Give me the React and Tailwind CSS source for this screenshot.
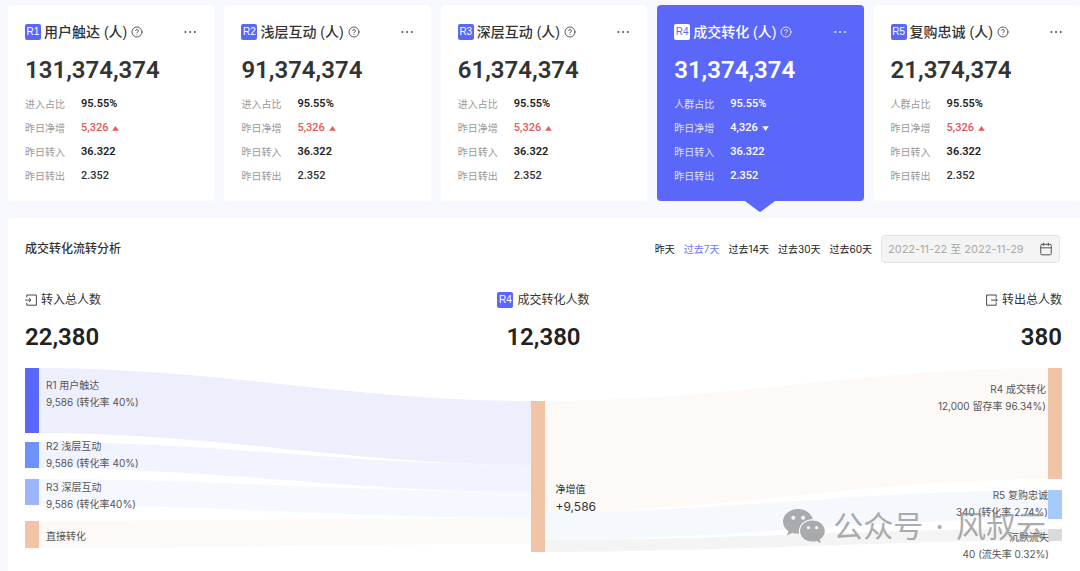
import React, { useState } from 'react';
import { Calendar, CircleHelp, Ellipsis } from 'lucide-react';

const cards = [
  { level: 'R1', name: '用户触达', total: '131,374,374', ratioLabel: '进入占比', growth: '5,326', up: true },
  { level: 'R2', name: '浅层互动', total: '91,374,374', ratioLabel: '进入占比', growth: '5,326', up: true },
  { level: 'R3', name: '深层互动', total: '61,374,374', ratioLabel: '进入占比', growth: '5,326', up: true },
  { level: 'R4', name: '成交转化', total: '31,374,374', ratioLabel: '人群占比', growth: '4,326', up: false },
  { level: 'R5', name: '复购忠诚', total: '21,374,374', ratioLabel: '人群占比', growth: '5,326', up: true },
];

const ranges = ['昨天', '过去7天', '过去14天', '过去30天', '过去60天'];

// x, y, height of each node
const nodes = [
  { x: 0, y: 0, h: 65, color: '#5b67f8' },
  { x: 0, y: 74, h: 26, color: '#6d93f8' },
  { x: 0, y: 111, h: 26, color: '#9db3fa' },
  { x: 0, y: 153, h: 27, color: '#f0c4a5' },
  { x: 506, y: 33, h: 151, color: '#f0c4a5' },
  { x: 1023, y: 0, h: 111, color: '#f0c4a5' },
  { x: 1023, y: 122, h: 29, color: '#a5cbfc' },
  { x: 1023, y: 161, h: 12, color: '#dadada' },
];

// from / to are [top, bottom]
const flows = [
  { x1: 14, x2: 506, from: [0, 65], to: [33, 97], color: '#eeeffd' },
  { x1: 14, x2: 506, from: [74, 100], to: [97, 124], color: '#f1f3fe' },
  { x1: 14, x2: 506, from: [111, 137], to: [124, 150], color: '#f5f8fe' },
  { x1: 14, x2: 506, from: [153, 180], to: [150, 176], color: '#fdf9f6' },
  { x1: 520, x2: 1023, from: [33, 144], to: [0, 111], color: '#fdf9f6' },
  { x1: 520, x2: 1023, from: [144, 172], to: [122, 151], color: '#f5f9fe' },
  { x1: 520, x2: 1023, from: [172, 184], to: [161, 173], color: '#f4f4f4' },
];

const flowPath = ({ x1, x2, from, to }) => {
  const c = (x2 - x1) * 0.36;
  return `M${x1} ${from[0]}C${x1 + c} ${from[0]} ${x2 - c} ${to[0]} ${x2} ${to[0]}V${to[1]}C${x2 - c} ${to[1]} ${x1 + c} ${from[1]} ${x1} ${from[1]}Z`;
};

const InIcon = () => (
  <svg className="h-3 w-3" viewBox="0 0 12 12" fill="none" stroke="currentColor" strokeWidth="0.9">
    <path d="M1.8 3.4V1h9.6v10.2H1.8V8.8" />
    <path d="M0.2 6.1h5.6M4 4.2l2 1.9-2 1.9" />
  </svg>
);

const OutIcon = () => (
  <svg className="h-3 w-3" viewBox="0 0 12 12" fill="none" stroke="currentColor" strokeWidth="0.9">
    <path d="M10.2 3.4V1H0.6v10.2h9.6V8.8" />
    <path d="M5 6.1h6.2M9.4 4.2l2 1.9-2 1.9" />
  </svg>
);

const Badge = ({ level, inverted }) => (
  <span
    className={`flex h-4 w-4 items-center justify-center rounded-xs font-['Liberation_Sans',sans-serif] text-[10px] leading-4 ${
      inverted ? 'bg-white text-[#5b67f8]' : 'bg-[#5b67f8] text-white'
    }`}
  >
    {level}
  </span>
);

const Trend = ({ up }) => (
  <svg className="h-[5px] w-[7px]" viewBox="0 0 7 5" fill="currentColor">
    {up ? <path d="M3.5 0 6.800 4.800H.2Z" /> : <path d="M3.5 5 .2.2h6.600Z" />}
  </svg>
);

const Row = ({ label, active, className, children }) => (
  <div className="flex h-6 items-center gap-4">
    <dt className={`text-[10px] ${active ? 'text-[#dfe1ff]' : 'text-[#999]'}`}>{label}</dt>
    <dd className={`flex items-center gap-1 font-['Roboto',sans-serif] text-[11px] ${className}`}>
      {children}
    </dd>
  </div>
);

const LevelCard = ({ card, active }) => {
  const value = active ? 'font-medium text-white' : 'font-semibold text-[#222]';
  return (
    <section
      className={`relative rounded-sm pt-[15px] pr-4 pb-[13px] pl-[17px] ${
        active ? 'bg-[#5b67f8] text-white' : 'bg-white text-[#333]'
      }`}
    >
      <div className="flex h-6 items-center">
        <Badge level={card.level} inverted={active} />
        <h2 className="ml-[3px] font-['Liberation_Sans','Noto_Sans_CJK_SC',sans-serif] text-sm font-medium whitespace-nowrap">
          {card.name} (人)
        </h2>
        <button className="ml-1" aria-label="说明">
          <CircleHelp className="h-3 w-3" strokeWidth={1.6} />
        </button>
        <button className="ml-auto" aria-label="更多">
          <Ellipsis className="h-4 w-4 fill-current" strokeWidth={0.6} />
        </button>
      </div>
      <p className="mt-2 font-['Roboto',sans-serif] text-2xl leading-9 font-semibold">
        {card.total}
      </p>
      <dl className="mt-1">
        <Row label={card.ratioLabel} active={active} className={value}>95.55%</Row>
        <Row label="昨日净增" active={active} className={active ? 'font-medium text-white' : 'font-medium text-[#e95656]'}>
          {card.growth}
          <Trend up={card.up} />
        </Row>
        <Row label="昨日转入" active={active} className={value}>36.322</Row>
        <Row label="昨日转出" active={active} className={active ? value : 'font-medium text-[#333]'}>2.352</Row>
      </dl>
      {active && (
        <svg
          className="absolute top-full left-1/2 h-[11px] w-[30px] -translate-x-1/2"
          viewBox="0 0 30 11"
          fill="#5b67f8"
        >
          <path d="M0 0h30L16 10.4q-1 .8-2 0Z" />
        </svg>
      )}
    </section>
  );
};

const Stat = ({ icon, label, value, className }) => (
  <div className={`flex flex-col ${className}`}>
    <div className="flex h-5 items-center gap-1 text-xs">
      {icon}
      <span>{label}</span>
    </div>
    <p className="mt-[9px] font-['Roboto',sans-serif] text-2xl leading-9 font-semibold text-[#222]">
      {value}
    </p>
  </div>
);

const Label = ({ title, text, className }) => (
  <div className={`absolute text-[10px] leading-[17px] text-[#555] ${className}`}>
    <p>{title}</p>
    {text && <p>{text}</p>}
  </div>
);

const Sankey = () => (
  <div className="relative mt-[13px] h-[203px]">
    <svg className="h-[184px] w-full" viewBox="0 0 1037 184" preserveAspectRatio="none">
      {flows.map((flow, index) => (
        <path key={index} d={flowPath(flow)} fill={flow.color} />
      ))}
      {nodes.map((node, index) => (
        <rect key={index} x={node.x} y={node.y} width="14" height={node.h} fill={node.color} />
      ))}
    </svg>

    <Label className="top-[9px] left-[21px]" title="R1 用户触达" text="9,586 (转化率 40%)" />
    <Label className="top-[70px] left-[21px]" title="R2 浅层互动" text="9,586 (转化率 40%)" />
    <Label className="top-[111px] left-[21px]" title="R3 深层互动" text="9,586 (转化率40%)" />
    <Label className="top-[160px] left-[21px]" title="直接转化" />

    <div className="absolute top-28 left-[calc(50%+12px)] text-[#333]">
      <p className="text-[10px] leading-[18px]">净增值</p>
      <p className="text-xs leading-[18px]">+9,586</p>
    </div>

    <Label className="top-[13px] right-4 text-right" title="R4 成交转化" text="12,000 留存率 96.34%)" />
    <Label className="top-[119px] right-[14px] text-right" title="R5 复购忠诚" text="340 (转化率 2.74%)" />
    <Label className="top-[161px] right-[13px] text-right" title="沉默流失" text="40 (流失率 0.32%)" />

    <div className="absolute top-[140px] right-4 flex items-center text-[#8f9192] opacity-75">
      <svg className="mr-2 h-9 w-[42px]" viewBox="0 0 42 36" fill="currentColor">
        <path
          fillRule="evenodd"
          d="M15 1C6.700 1 0 6.600 0 13.600c0 3.900 2.100 7.300 5.400 9.600L4 27.500l5.200-2.600c1.900.6 3.800.9 5.800.9h1.300a10.500 10.500 0 0 1-.4-2.800c0-6.500 6-11.700 13.300-11.700h.6C28.500 5.300 22.400 1 15 1ZM10.300 7.700a2 2 0 1 1 0 4 2 2 0 0 1 0-4Zm9.800 0a2 2 0 1 1 0 4 2 2 0 0 1 0-4Z"
        />
        <path
          fillRule="evenodd"
          d="M29.500 12.600c-7 0-12.500 4.700-12.500 10.500s5.500 10.500 12.500 10.500c1.500 0 3-.2 4.300-.6l4.100 2.300-1.100-3.700c3-1.900 5-5 5-8.500 0-5.800-5.500-10.500-12.300-10.500ZM25.400 18a1.600 1.600 0 1 1 0 3.200 1.600 1.600 0 0 1 0-3.200Zm8.200 0a1.600 1.600 0 1 1 0 3.200 1.600 1.600 0 0 1 0-3.200Z"
        />
      </svg>
      <p className="flex gap-3 text-3xl">
        <span>公众号</span>
        <span>·</span>
        <span>风叔云</span>
      </p>
    </div>
  </div>
);

const App = () => {
  const [level, setLevel] = useState('R4');
  const [range, setRange] = useState('过去7天');

  return (
    <div className="flex min-h-screen flex-col bg-[#f8f9fe] pt-[5px] pl-2 font-['Inter','Noto_Sans_CJK_SC',sans-serif] text-[#333]">
      <div className="grid grid-cols-5 gap-[10px]">
        {cards.map((card) => (
          <div key={card.level} onClick={() => setLevel(card.level)}>
            <LevelCard card={card} active={card.level === level} />
          </div>
        ))}
      </div>

      <main className="mt-[17px] flex-1 rounded-tl-sm bg-white pt-[17px] pr-[18px] pl-[17px]">
        <div className="flex h-7 items-center justify-between">
          <h1 className="text-xs font-medium">成交转化流转分析</h1>
          <div className="flex items-center gap-[9px] text-[10px]">
            {ranges.map((item) => (
              <button
                key={item}
                onClick={() => setRange(item)}
                className={item === range ? 'text-[#6c77f9]' : 'text-[#222]'}
              >
                {item}
              </button>
            ))}
            <label className="mr-0.5 flex h-7 w-[179px] items-center rounded-sm border border-[#e3e3e3] bg-[#f4f4f4] px-1.5">
              <input
                type="text"
                readOnly
                aria-label="日期范围"
                value="2022-11-22 至 2022-11-29"
                className="min-w-0 flex-1 bg-transparent text-[11px] text-[#aaa] outline-none"
              />
              <Calendar className="h-[14px] w-[14px] text-[#555]" strokeWidth={1.7} />
            </label>
          </div>
        </div>

        <div className="mt-[27px] grid grid-cols-3">
          <Stat className="items-start" icon={<InIcon />} label="转入总人数" value="22,380" />
          <Stat className="items-center" icon={<Badge level="R4" />} label="成交转化人数" value="12,380" />
          <Stat className="items-end" icon={<OutIcon />} label="转出总人数" value="380" />
        </div>

        <Sankey />
      </main>
    </div>
  );
};

export default App;
